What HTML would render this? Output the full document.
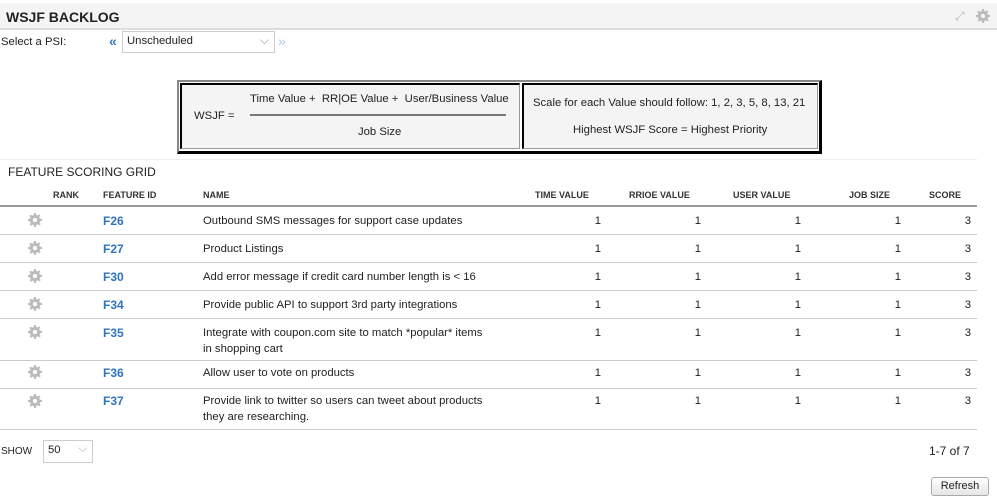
<!DOCTYPE html>
<html><head><style>
*{margin:0;padding:0;box-sizing:border-box}
body{width:997px;height:500px;background:#fff;font-family:"Liberation Sans",sans-serif;font-size:11.3px;color:#222;position:relative;overflow:hidden}
.a{position:absolute;white-space:nowrap}
.hdr{position:absolute;left:0;top:3px;width:997px;height:27px;background:#f4f4f4;border-bottom:2px solid #ddd}
.gear{position:absolute;width:14px;height:14px}
.row{position:absolute;left:0;width:977px;border-bottom:1px solid #ccc}
.c{position:absolute;top:6px;line-height:16px}
.id{color:#2f74c0;font-weight:bold;font-size:12px}
.n{text-align:right;width:20px}
.th{position:absolute;top:190px;font-size:9px;font-weight:bold;color:#333}
</style></head><body>
<div class="hdr"></div>
<div class="a" style="left:6px;top:9px;font-size:14px;font-weight:bold;color:#222">WSJF BACKLOG</div>
<div class="a" style="left:955px;top:9px;color:#bbb;font-size:12px">⤢</div>
<svg class="gear" style="left:976px;top:9px" viewBox="0 0 16 16"><path fill="#bbb" d="M7 0h2l.4 2.2 1.5.6 1.8-1.3 1.4 1.4-1.3 1.8.6 1.5L16 7v2l-2.2.4-.6 1.5 1.3 1.8-1.4 1.4-1.8-1.3-1.5.6L9 16H7l-.4-2.2-1.5-.6-1.8 1.3-1.4-1.4 1.3-1.8-.6-1.5L0 9V7l2.2-.4.6-1.5-1.3-1.8 1.4-1.4 1.8 1.3 1.5-.6zM8 5.5a2.5 2.5 0 100 5 2.5 2.5 0 000-5z"/></svg>
<div class="a" style="left:1px;top:36px">Select a PSI:</div>
<div class="a" style="left:109px;top:33px;color:#2f74c0;font-size:14px;font-weight:bold">«</div>
<div class="a" style="left:122px;top:31px;width:153px;height:22px;border:1px solid #ccc;padding:3px 4px">Unscheduled<span style="position:absolute;right:5px;top:1px;color:#999;font-size:12px">⌵</span></div>
<div class="a" style="left:278px;top:33px;color:#a9c8e8;font-size:14px">»</div>
<div class="a" style="left:177px;top:80px;width:645px;height:74px;border:1px solid #999;border-right:3px solid #000;border-bottom:3px solid #000;border-left:2px solid #888;border-top:2px solid #888;background:#fff"></div>
<div class="a" style="left:180px;top:83px;width:340px;height:66px;border:1px solid #999;border-left:2px solid #000;border-top:2px solid #000;background:#f4f4f4"></div>
<div class="a" style="left:522px;top:83px;width:296px;height:66px;border:1px solid #999;border-left:2px solid #000;border-top:2px solid #000;background:#f4f4f4"></div>
<div class="a" style="left:194px;top:110px">WSJF =</div>
<div class="a" style="left:250px;top:93px">Time Value +&nbsp; RR|OE Value +&nbsp; User/Business Value</div>
<div class="a" style="left:250px;top:114px;width:256px;height:2px;background:#777"></div>
<div class="a" style="left:358px;top:126px">Job Size</div>
<div class="a" style="left:533px;top:97px">Scale for each Value should follow: 1, 2, 3, 5, 8, 13, 21</div>
<div class="a" style="left:573px;top:124px">Highest WSJF Score = Highest Priority</div>
<div class="a" style="left:0;top:159px;width:977px;height:1px;background:#eee"></div>
<div class="a" style="left:8px;top:165px;font-size:12px;color:#222">FEATURE SCORING GRID</div>
<div class="th" style="left:53px">RANK</div>
<div class="th" style="left:103px">FEATURE ID</div>
<div class="th" style="left:203px">NAME</div>
<div class="th" style="left:535px">TIME VALUE</div>
<div class="th" style="left:629px">RRIOE VALUE</div>
<div class="th" style="left:733px">USER VALUE</div>
<div class="th" style="left:849px">JOB SIZE</div>
<div class="th" style="left:929px">SCORE</div>
<div class="a" style="left:0;top:205px;width:977px;height:2px;background:#999"></div>

<div class="row" style="top:207px;height:28px"><svg class="gear" style="left:28px;top:6px" viewBox="0 0 16 16"><use href="#g"/></svg><span class="c id" style="left:103px">F26</span><span class="c" style="left:203px">Outbound SMS messages for support case updates</span><span class="c n" style="left:581px">1</span><span class="c n" style="left:681px">1</span><span class="c n" style="left:781px">1</span><span class="c n" style="left:881px">1</span><span class="c n" style="left:951px">3</span></div>
<div class="row" style="top:235px;height:28px"><svg class="gear" style="left:28px;top:6px" viewBox="0 0 16 16"><use href="#g"/></svg><span class="c id" style="left:103px">F27</span><span class="c" style="left:203px">Product Listings</span><span class="c n" style="left:581px">1</span><span class="c n" style="left:681px">1</span><span class="c n" style="left:781px">1</span><span class="c n" style="left:881px">1</span><span class="c n" style="left:951px">3</span></div>
<div class="row" style="top:263px;height:28px"><svg class="gear" style="left:28px;top:6px" viewBox="0 0 16 16"><use href="#g"/></svg><span class="c id" style="left:103px">F30</span><span class="c" style="left:203px">Add error message if credit card number length is &lt; 16</span><span class="c n" style="left:581px">1</span><span class="c n" style="left:681px">1</span><span class="c n" style="left:781px">1</span><span class="c n" style="left:881px">1</span><span class="c n" style="left:951px">3</span></div>
<div class="row" style="top:291px;height:28px"><svg class="gear" style="left:28px;top:6px" viewBox="0 0 16 16"><use href="#g"/></svg><span class="c id" style="left:103px">F34</span><span class="c" style="left:203px">Provide public API to support 3rd party integrations</span><span class="c n" style="left:581px">1</span><span class="c n" style="left:681px">1</span><span class="c n" style="left:781px">1</span><span class="c n" style="left:881px">1</span><span class="c n" style="left:951px">3</span></div>
<div class="row" style="top:319px;height:42px"><svg class="gear" style="left:28px;top:6px" viewBox="0 0 16 16"><use href="#g"/></svg><span class="c id" style="left:103px">F35</span><span class="c" style="left:203px">Integrate with coupon.com site to match *popular* items<br>in shopping cart</span><span class="c n" style="left:581px">1</span><span class="c n" style="left:681px">1</span><span class="c n" style="left:781px">1</span><span class="c n" style="left:881px">1</span><span class="c n" style="left:951px">3</span></div>
<div class="row" style="top:361px;height:28px"><svg class="gear" style="left:28px;top:4px" viewBox="0 0 16 16"><use href="#g"/></svg><span class="c id" style="left:103px;top:4px">F36</span><span class="c" style="left:203px;top:4px">Allow user to vote on products</span><span class="c n" style="left:581px;top:4px">1</span><span class="c n" style="left:681px;top:4px">1</span><span class="c n" style="left:781px;top:4px">1</span><span class="c n" style="left:881px;top:4px">1</span><span class="c n" style="left:951px;top:4px">3</span></div>
<div class="row" style="top:389px;height:41px"><svg class="gear" style="left:28px;top:5px" viewBox="0 0 16 16"><use href="#g"/></svg><span class="c id" style="left:103px;top:4px">F37</span><span class="c" style="left:203px;top:4px">Provide link to twitter so users can tweet about products<br>they are researching.</span><span class="c n" style="left:581px;top:4px">1</span><span class="c n" style="left:681px;top:4px">1</span><span class="c n" style="left:781px;top:4px">1</span><span class="c n" style="left:881px;top:4px">1</span><span class="c n" style="left:951px;top:4px">3</span></div>

<svg width="0" height="0" style="position:absolute"><defs><path id="g" fill="#bbb" d="M7 0h2l.4 2.2 1.5.6 1.8-1.3 1.4 1.4-1.3 1.8.6 1.5L16 7v2l-2.2.4-.6 1.5 1.3 1.8-1.4 1.4-1.8-1.3-1.5.6L9 16H7l-.4-2.2-1.5-.6-1.8 1.3-1.4-1.4 1.3-1.8-.6-1.5L0 9V7l2.2-.4.6-1.5-1.3-1.8 1.4-1.4 1.8 1.3 1.5-.6zM8 5.5a2.5 2.5 0 100 5 2.5 2.5 0 000-5z"/></defs></svg>

<div class="a" style="left:1px;top:446px;font-size:10px">SHOW</div>
<div class="a" style="left:43px;top:440px;width:50px;height:23px;border:1px solid #ccc;padding:3px 4px">50<span style="position:absolute;right:5px;top:2px;color:#aaa">⌵</span></div>
<div class="a" style="left:929px;top:444px;font-size:12px">1-7 of 7</div>
<div class="a" style="left:931px;top:477px;width:58px;height:19px;border:1px solid #aaa;border-radius:3px;background:linear-gradient(#fff,#e6e6e6);font-size:11px;text-align:center;line-height:17px">Refresh</div>
</body></html>
